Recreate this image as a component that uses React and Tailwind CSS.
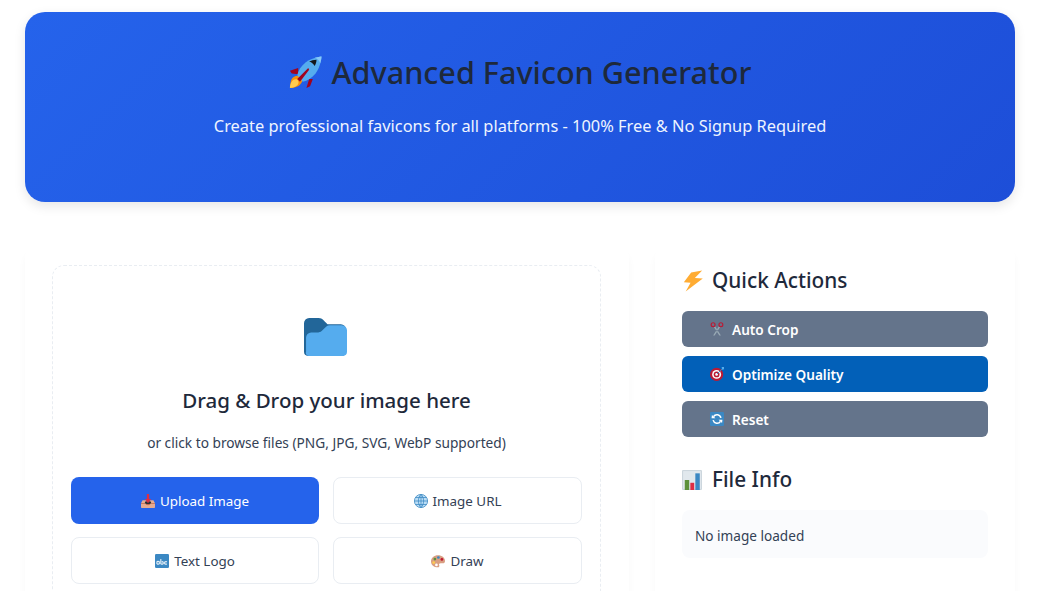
const Rocket = ({ className }) => (
  <svg viewBox="0 0 36 36" className={className}>
    <path d="M2 35c-1-5 0-10 3-12 3-2 6-2 8 0s2 5 0 7c-2 3-7 5-11 5z" fill="#F4900C" />
    <path d="M1 35c0-4 2-8 4-9 2-1 4-1 5 1s0 4-1 5c-2 2-5 3-8 3z" fill="#FFCC4D" />
    <path d="M10 13l-9 3 2 3 7 1zM22 25l-3 10 4-2 3-8z" fill="#A0041E" />
    <path d="M35.500 .5S26 1 18 7c-5 4-8 9-9 14l6 7c5-1 10-4 14-9 6-8 6.500-18.500 6.500-18.500z" fill="#55ACEE" />
    <path d="M9 25l3 3 10-13-1-2z" fill="#A0041E" />
    <path d="M22 6c2-1 5-2 8-2 0 3-1 5-2 7-1-2-3-4-6-5z" fill="#14171a" />
    <path d="M35.500 .5S32 .7 28 2c3 1 5 3 6 6 1.500-4 1.500-7.500 1.500-7.500z" fill="#88C9F9" />
  </svg>
);
const Bolt = ({ className }) => (
  <svg viewBox="0 0 36 36" className={className}>
    <path d="M33 1L15 4 3 20l11 1-8 14 28-21-13-1z" fill="#FFAC33" />
  </svg>
);
const Folder = ({ className }) => (
  <svg viewBox="0 0 42 37" className={className}>
    <path d="M0 33V5a5 5 0 0 1 5-5h9c3 0 4 1 6 3l3 3h13a5 5 0 0 1 5 5v22a4 4 0 0 1-4 4H4a4 4 0 0 1-4-4z" fill="#226699" />
    <path d="M2 33V19a5 5 0 0 1 5-5h7c2 0 3-1 4-2l2-2c2-2 3-3 5-3h12a5 5 0 0 1 5 5v21a4 4 0 0 1-4 4H5a3 3 0 0 1-3-4z" fill="#55ACEE" />
  </svg>
);
const Scissors = ({ className }) => (
  <svg viewBox="0 0 36 36" className={className}>
    <path d="M8 35L23 11l3 2-14 22zM28 35L13 11l-3 2 14 22z" fill="#99AAB5" />
    <circle cx="8" cy="7" r="5" fill="none" stroke="#BB1A34" strokeWidth="3" />
    <circle cx="28" cy="7" r="5" fill="none" stroke="#BB1A34" strokeWidth="3" />
  </svg>
);
const Target = ({ className }) => (
  <svg viewBox="0 0 36 36" className={className}>
    <circle cx="17" cy="19" r="17" fill="#BB1A34" />
    <circle cx="17" cy="19" r="11.500" fill="#fff" />
    <circle cx="17" cy="19" r="7.500" fill="#BB1A34" />
    <circle cx="17" cy="19" r="3.500" fill="#fff" />
    <path d="M18 18L32 4" stroke="#3B88C3" strokeWidth="2.500" />
    <path d="M30 0h6v6l-5 1z" fill="#55ACEE" />
  </svg>
);
const Refresh = ({ className }) => (
  <svg viewBox="0 0 36 36" className={className}>
    <rect width="36" height="36" rx="3" fill="#3B88C3" />
    <path d="M8 21a10.500 10.500 0 0 0 19 3M28 15a10.500 10.500 0 0 0-19-3" fill="none" stroke="#fff" strokeWidth="4" />
    <path d="M5 8l9 8H4zM31 28l-9-8h10z" fill="#fff" />
  </svg>
);
const Chart = ({ className }) => (
  <svg viewBox="0 0 36 36" className={className}>
    <rect width="36" height="36" rx="2" fill="#CCD6DD" />
    <rect x="2" y="2" width="32" height="32" fill="#E1E8ED" />
    <rect x="5" y="18" width="8" height="18" fill="#5C913B" />
    <rect x="15" y="23" width="7" height="13" fill="#DD2E44" />
    <rect x="24" y="6" width="8" height="30" fill="#3B88C3" />
  </svg>
);
const Inbox = ({ className }) => (
  <svg viewBox="0 0 36 36" className={className}>
    <path d="M0 24l4-8h28l4 8v10a2 2 0 0 1-2 2H2a2 2 0 0 1-2-2z" fill="#E5AB91" />
    <path d="M0 24h11c1 3 3 5 7 5s6-2 7-5h11v2H0z" fill="#C1694F" />
    <ellipse cx="18" cy="22" rx="8" ry="4" fill="#292F33" />
    <path d="M18 24l-8-11h5V0h6v13h5z" fill="#DD2E44" />
  </svg>
);
const Globe = ({ className }) => (
  <svg viewBox="0 0 36 36" className={className}>
    <circle cx="18" cy="18" r="17" fill="#BBDDF5" stroke="#3B88C3" strokeWidth="2" />
    <path d="M18 1v34M1 18h34M4 9h28M4 27h28M18 1c-9 9-9 25 0 34M18 1c9 9 9 25 0 34" fill="none" stroke="#3B88C3" strokeWidth="2" />
  </svg>
);
const Abc = ({ className }) => (
  <svg viewBox="0 0 36 36" className={className}>
    <rect width="36" height="36" rx="3" fill="#3B88C3" />
    <path d="M5 19h6v7H5zM15 13v13h6v-6h-4M25 20h6M25 20v6h6" fill="none" stroke="#fff" strokeWidth="2.500" />
  </svg>
);
const Palette = ({ className }) => (
  <svg viewBox="0 0 36 36" className={className}>
    <path d="M18 3C8 3 0 10 0 19s8 15 17 15c5 0 5-3 4-6-1-2 0-4 4-4h5c4 0 6-2 6-6C36 9 28 3 18 3z" fill="#D99E82" />
    <circle cx="10" cy="13" r="3.500" fill="#5C913B" />
    <circle cx="19" cy="9" r="3.500" fill="#3B88C3" />
    <circle cx="28" cy="14" r="3.500" fill="#BE1931" />
    <circle cx="7" cy="22" r="3.500" fill="#FFCC4D" />
    <circle cx="14" cy="28" r="3.500" fill="#fff" />
  </svg>
);

const OptionButton = ({ icon: Icon, label, active, iconClass = "w-[14px] h-[14px]" }) => (
  <button
    className={
      active
        ? "h-[47px] rounded-lg bg-[#2563eb] text-white text-[13.400px] flex items-center justify-center gap-[5px]"
        : "h-[47px] rounded-lg bg-white border border-[#e9edf2] text-[#334155] text-[13.400px] flex items-center justify-center gap-[5px]"
    }
  >
    <Icon className={iconClass} />
    <span className="pt-[2px]">{label}</span>
  </button>
);

const ActionButton = ({ icon: Icon, label, primary }) => (
  <button
    className={
      primary
        ? "h-9 w-full rounded-md bg-[#0260b8] text-white text-[13.600px] font-semibold flex items-center pl-[28px] gap-[8px]"
        : "h-9 w-full rounded-md bg-[#64748b] text-white text-[13.600px] font-semibold flex items-center pl-[28px] gap-[8px]"
    }
  >
    <Icon className="w-[14px] h-[14px]" />
    <span className="pt-[2px]">{label}</span>
  </button>
);

export default function App() {
  return (
    <div className="h-[591px] overflow-hidden bg-white pl-[25px] pr-[22px] pt-[12px] font-['Noto_Sans','Open_Sans',sans-serif]">
      <header className="h-[190px] rounded-[20px] bg-[linear-gradient(135deg,#2563eb,#1d4ed8)] shadow-[0_4px_12px_rgba(0,0,0,0.1)] flex flex-col items-center pt-[36px]">
        <h1 className="flex items-center gap-[10px] text-[30.600px] leading-[48px] font-medium text-[#1e293b]">
          <Rocket className="w-[33px] h-[33px]" />
          <span>Advanced Favicon Generator</span>
        </h1>
        <p className="mt-[18px] text-[16.400px] leading-[24px] text-[#eef4ff]">
          Create professional favicons for all platforms - 100% Free &amp; No Signup Required
        </p>
      </header>
      <main className="mt-[43px] flex gap-[26px]">
        <section className="w-[604px] h-[400px] shrink-0 rounded-xl bg-white shadow-[0_8px_8px_rgba(15,23,42,0.03)] pt-[20px] pl-[27px] pr-[28px]">
          <div className="h-[400px] rounded-xl border border-dashed border-[#e9edf2] pl-[18px] pr-[18px] pt-[52px]">
            <div className="flex justify-center pr-[2px]">
              <Folder className="w-[43px] h-[38px]" />
            </div>
            <h3 className="mt-[28px] text-center text-[20.500px] leading-[32px] font-medium text-[#1e293b]">
              Drag &amp; Drop your image here
            </h3>
            <p className="mt-[16px] text-center text-[13.700px] leading-[22px] text-[#334155]">
              or click to browse files (PNG, JPG, SVG, WebP supported)
            </p>
            <div className="mt-[23px] grid grid-cols-[248px_249px] gap-x-[14px] gap-y-[13px]">
              <OptionButton icon={Inbox} label="Upload Image" active />
              <OptionButton icon={Globe} label="Image URL" />
              <OptionButton icon={Abc} label="Text Logo" />
              <OptionButton icon={Palette} label="Draw" />
            </div>
          </div>
        </section>
        <aside className="w-[360px] h-[400px] shrink-0 rounded-xl bg-white shadow-[0_8px_8px_rgba(15,23,42,0.03)] px-[27px] pt-[18px]">
          <h2 className="flex items-center gap-[8px] text-[20.800px] leading-[35px] font-medium text-[#1e293b]">
            <Bolt className="w-[22px] h-[22px]" />
            <span>Quick Actions</span>
          </h2>
          <div className="mt-[13px] flex flex-col gap-[9px]">
            <ActionButton icon={Scissors} label="Auto Crop" />
            <ActionButton icon={Target} label="Optimize Quality" primary />
            <ActionButton icon={Refresh} label="Reset" />
          </div>
          <h2 className="mt-[25px] flex items-center gap-[10px] text-[20.800px] leading-[35px] font-medium text-[#1e293b]">
            <Chart className="w-[20px] h-[20px]" />
            <span>File Info</span>
          </h2>
          <div className="mt-[13px] h-[48px] rounded-lg bg-[#fafbfd] px-[13px] pt-[4px] flex items-center text-[13.600px] text-[#334155]">
            No image loaded
          </div>
        </aside>
      </main>
    </div>
  );
}
